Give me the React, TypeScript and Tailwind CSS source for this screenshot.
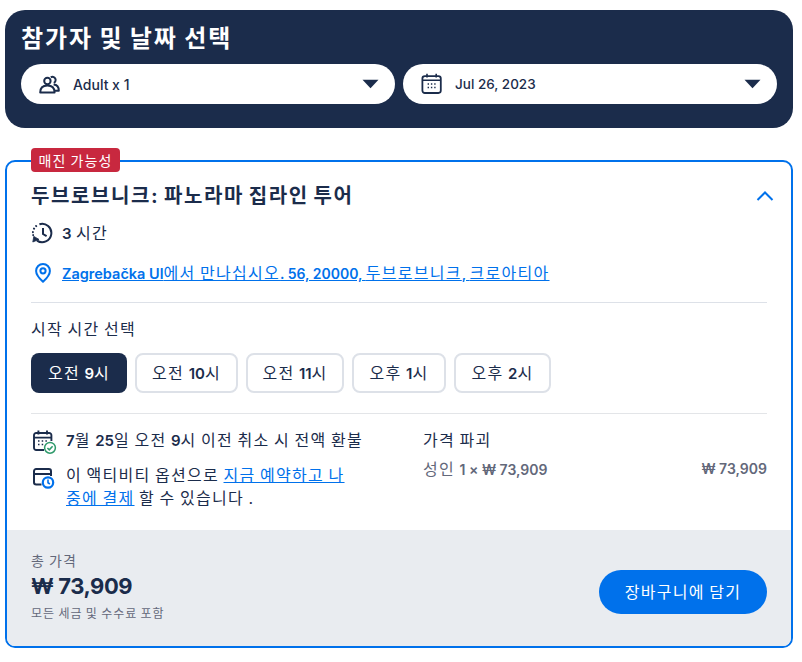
const F = '"Inter","Noto Sans CJK KR",sans-serif';
const K = "tracking-[0.08em] [word-spacing:-0.08em]";

function L({ children, className = "font-semibold text-[15px]" }: { children: React.ReactNode; className?: string }) {
  return <span className={`tracking-normal [word-spacing:0px] ${className}`}>{children}</span>;
}

function Caret() {
  return (
    <svg width="17" height="10" viewBox="0 0 17 10" className="ml-auto shrink-0">
      <path d="M0.5 0.8H16.5L8.5 9.2Z" fill="#1b2c4b" />
    </svg>
  );
}

function People() {
  return (
    <svg width="21" height="20" viewBox="0 0 21 20" fill="none" stroke="#1b2c4b" strokeWidth="2">
      <circle cx="8.4" cy="7" r="3.2" />
      <path d="M11.8 3.4a3.1 3.1 0 1 1 3 5.4" />
      <path d="M1.2 18.6c0-5 3-7 7.2-7s7.2 2 7.2 7z" strokeLinejoin="round" />
      <path d="M14.6 10.6c3 .2 5.2 2.2 5.2 6.2h-4" strokeLinejoin="round" />
    </svg>
  );
}

function Calendar() {
  return (
    <svg width="22" height="22" viewBox="0 0 22 22" fill="none" stroke="#1b2c4b">
      <rect x="1.4" y="3.2" width="18.4" height="16.8" rx="2.4" strokeWidth="1.8" />
      <path d="M1.4 7.3H19.8M6 .8V4.5M15.2 .8V4.5" strokeWidth="1.6" />
      <path d="M6.6 11h1.4M9.9 11h1.4M13.2 11h1.4M6.6 14.6h1.4M9.9 14.6h1.4M13.2 14.6h1.4" strokeWidth="1.5" />
    </svg>
  );
}

function Clock() {
  return (
    <svg width="22" height="22" viewBox="0 0 22 22" fill="none" stroke="#1b2c4b" strokeWidth="2">
      <path d="M8.4 2.2A9.2 9.2 0 1 1 6 18.6" />
      <path d="M12 6v6l3.6 2.2" />
      <path d="M1.8 20l1-5.6 5.2 3z" fill="#1b2c4b" strokeWidth="0.8" />
      <path d="M5 3.9l.3.3M2.9 6.6l.3.2M1.9 9.9v.3M2.1 13l.1.2" strokeLinecap="round" strokeWidth="1.9" />
    </svg>
  );
}

function Pin() {
  return (
    <svg width="16" height="20" viewBox="0 0 16 20" fill="none" stroke="#0071eb" strokeWidth="2">
      <path d="M8 18.8C4.4 15.4 1.1 12 1.1 7.9a6.9 6.9 0 0 1 13.8 0c0 4.1-3.3 7.5-6.9 10.9z" strokeLinejoin="round" />
      <circle cx="8" cy="7.8" r="2.6" />
    </svg>
  );
}

function CalCheck() {
  return (
    <svg width="24" height="24" viewBox="0 0 24 24" fill="none">
      <g stroke="#1b2c4b" strokeWidth="1.9">
        <path d="M11 20H3.2A2.2 2.2 0 0 1 1 17.8V5.2A2.2 2.2 0 0 1 3.2 3h13a2.2 2.2 0 0 1 2.2 2.2V11" />
        <path d="M1 7.6H18.4M5.4 .4V4.5M14 .4V4.5" />
        <path d="M5 11h1.5M8.7 11h1.5M12.4 11h1.5M5 14.6h1.5M8.7 14.6h1.5" strokeWidth="1.5" />
      </g>
      <circle cx="17" cy="17.8" r="5.4" fill="#fff" stroke="#2f9a6b" strokeWidth="1.5" />
      <path d="M14.4 18l1.9 1.9 3.3-3.6" stroke="#2f9a6b" strokeWidth="1.6" />
    </svg>
  );
}

function CardClock() {
  return (
    <svg width="24" height="22" viewBox="0 0 24 22" fill="none">
      <path d="M8.5 16.4H3.2A2.2 2.2 0 0 1 1 14.2V3.2A2.2 2.2 0 0 1 3.2 1h12.6a2.2 2.2 0 0 1 2.2 2.2V8" stroke="#1b2c4b" strokeWidth="2" />
      <path d="M1 6H18" stroke="#1b2c4b" strokeWidth="2" />
      <circle cx="15" cy="14.5" r="5.2" fill="#fff" stroke="#0071eb" strokeWidth="2.2" />
      <path d="M15 11.6v3.2l1.9 1.2" stroke="#0071eb" strokeWidth="1.6" />
    </svg>
  );
}

function Time({ label, num, w, active }: { label: string; num: string; w: string; active?: boolean }) {
  return (
    <button
      className={
        active
          ? `h-10 ${w} rounded-lg bg-[#1b2c4b] text-white text-base flex items-center justify-center whitespace-pre ${K}`
          : `h-10 ${w} rounded-lg border-2 border-[#dde1e8] bg-white text-[#1b2c4b] text-base flex items-center justify-center whitespace-pre ${K}`
      }
    >
      <span>{label} <L>{num}</L>시</span>
    </button>
  );
}

export default function App() {
  return (
    <div className="w-[798px] h-[662px] bg-white pl-[5px] pr-0 pt-[10px] overflow-hidden" style={{ fontFamily: F }}>
      <div className="h-[118px] w-[788px] rounded-[20px] bg-[#1b2c4b] px-4 pt-[13px]">
        <h1 className="text-white text-[24px] font-bold leading-8 tracking-[0.08em] [word-spacing:-0.05em]">참가자 및 날짜 선택</h1>
        <div className="mt-[9px] flex gap-2">
          <div className="flex-1 h-10 rounded-[20px] bg-white flex items-center pl-[18px] pr-4">
            <People />
            <span className="ml-[13px] text-[14px] font-medium text-[#1b2c4b]">Adult x 1</span>
            <Caret />
          </div>
          <div className="flex-1 h-10 rounded-[20px] bg-white flex items-center pl-[18px] pr-4">
            <Calendar />
            <span className="ml-[12px] text-[13.5px] font-medium text-[#1b2c4b]">Jul 26, 2023</span>
            <Caret />
          </div>
        </div>
      </div>

      <div className="relative mt-8 h-[488px] w-[788px] rounded-[10px] border-2 border-[#0071eb] flex flex-col overflow-visible">
        <div className={`absolute left-6 -top-[14px] h-6 w-[89px] rounded bg-[#c8283f] text-white text-[14px] flex items-center justify-center ${K}`}>
          매진 가능성
        </div>
        <div className="flex-1 px-6 pt-[20px]">
          <div className="flex items-center h-7 text-[#1b2c4b]">
            <span className={`text-[20px] font-bold ${K}`}>두브로브니크: 파노라마 집라인 투어</span>
            <svg width="18" height="10" viewBox="0 0 18 10" className="ml-auto mr-[-7px]" fill="none" stroke="#0071eb" strokeWidth="2">
              <path d="M1.5 9L9 1.5 16.5 9" />
            </svg>
          </div>
          <div className="mt-[9px] flex items-center h-7 text-base text-[#1b2c4b]">
            <Clock />
            <span className={`ml-[9px] ${K}`}><L>3</L> 시간</span>
          </div>
          <div className="mt-3 flex items-center h-7 text-base text-[#0071eb]">
            <span className="ml-[4px] flex"><Pin /></span>
            <span className={`ml-[11px] underline whitespace-nowrap ${K}`}><L className="font-semibold text-[14.5px]">Zagrebačka Ul</L>에서 만나십시오<L className="font-semibold text-[14px]">. 56, 20000, </L>두브로브니크<L className="font-semibold text-[14px]">, </L>크로아티아</span>
          </div>
          <div className="mt-[15px] h-px bg-[#dde1e8]" />
          <div className={`mt-4 h-5 leading-5 text-base text-[#1b2c4b] ${K}`}>시작 시간 선택</div>
          <div className="mt-[14px] flex gap-2">
            <Time active label="오전" num="9" w="w-24" />
            <Time label="오전" num="10" w="w-[103px]" />
            <Time label="오전" num="11" w="w-[98px]" />
            <Time label="오후" num="1" w="w-[94px]" />
            <Time label="오후" num="2" w="w-[97px]" />
          </div>
          <div className="mt-5 h-px bg-[#e3e5e8]" />
          <div className="mt-[14px] flex">
            <div className="w-[392px] text-base text-[#1b2c4b]">
              <div className="flex items-start">
                <span className="flex mt-[2px] ml-[2px]"><CalCheck /></span>
                <span className={`ml-[9px] leading-6 whitespace-nowrap ${K}`}><L>7</L>월 <L>25</L>일 오전 <L>9</L>시 이전 취소 시 전액 환불</span>
              </div>
              <div className="mt-[10px] flex items-start">
                <span className="flex mt-[4px] ml-[2px]"><CardClock /></span>
                <span className={`ml-[9px] w-[285px] leading-[23px] ${K}`}>이 액티비티 옵션으로 <span className="underline text-[#0071eb]">지금 예약하고 나중에 결제</span> 할 수 있습니다 .</span>
              </div>
            </div>
            <div className="flex-1 text-base">
              <div className={`leading-6 text-[#1b2c4b] ${K}`}>가격 파괴</div>
              <div className={`mt-[5px] flex justify-between leading-6 text-[#63687a] ${K}`}>
                <span>성인 <L className="font-semibold text-[14px]">1 × ₩ 73,909</L></span>
                <L className="font-semibold text-[14px]">₩ 73,909</L>
              </div>
            </div>
          </div>
        </div>
        <div className="h-[116px] rounded-b-[8px] bg-[#e9ecf0] pl-6 pr-6 flex items-center justify-between">
          <div className="-mt-[3px]">
            <div className={`text-[14px] leading-5 text-[#63687a] ${K}`}>총 가격</div>
            <div className="text-[22px] font-bold tracking-[-0.02em] leading-[30px] text-[#1b2c4b]">₩ 73,909</div>
            <div className={`mt-[4px] text-[12px] leading-[18px] text-[#63687a] ${K}`}>모든 세금 및 수수료 포함</div>
          </div>
          <button className={`mt-[8px] h-11 w-[168px] rounded-full bg-[#0071eb] text-white text-base ${K}`}>장바구니에 담기</button>
        </div>
      </div>
    </div>
  );
}
